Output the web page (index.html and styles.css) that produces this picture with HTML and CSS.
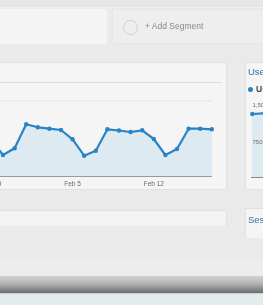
FILE: index.html
```html
<!DOCTYPE html>
<html lang="en">
<head>
  <meta charset="UTF-8" />
  <meta name="viewport" content="width=device-width, initial-scale=1" />
  <title>Audience Overview</title>
  <link rel="stylesheet" href="styles.css">
</head>
<body>

  <div class="device">
    <div class="screen">
      <div class="topline"></div>

      <!-- Segment bar -->
      <div class="toolbar">
        <div class="seg seg-current"></div>
        <div class="seg seg-add">
          <span class="seg-ring"></span>
          <span class="seg-label">+ Add Segment</span>
        </div>
      </div>

      <div class="dashboard">
        <div class="col-main">
          <!-- Sessions over time -->
          <div class="card chart-card">
            <div class="card-head"></div>
            <svg class="chart" width="226" height="106" viewBox="0 83 226 106">
              <line x1="0" y1="101" x2="212" y2="101" stroke="#e6e6e6" stroke-width="1" />
              <polygon fill="#deeaf2" points="-8.6,140 3,155 14.6,148.3 26.2,124.3 37.8,127.3 49.4,128.7 61,130 72.6,139.3 84.2,155.7 95.8,150.7 107.4,129.3 119,130.5 130.6,132 142.2,130.3 153.8,139 165.4,155 177,149 188.6,128.7 200.2,128.7 211.8,129.3 211.8,176 -8.6,176" />
              <line x1="0" y1="176.5" x2="212" y2="176.5" stroke="#9a9a9a" stroke-width="1" />
              <polyline fill="none" stroke="#2a84c3" stroke-width="2.2" stroke-linejoin="round" points="-8.6,140 3,155 14.6,148.3 26.2,124.3 37.8,127.3 49.4,128.7 61,130 72.6,139.3 84.2,155.7 95.8,150.7 107.4,129.3 119,130.5 130.6,132 142.2,130.3 153.8,139 165.4,155 177,149 188.6,128.7 200.2,128.7 211.8,129.3" />
              <g fill="#2a84c3">
                <circle cx="3" cy="155" r="2.2" />
                <circle cx="14.6" cy="148.3" r="2.2" />
                <circle cx="26.2" cy="124.3" r="2.2" />
                <circle cx="37.8" cy="127.3" r="2.2" />
                <circle cx="49.4" cy="128.7" r="2.2" />
                <circle cx="61" cy="130" r="2.2" />
                <circle cx="72.6" cy="139.3" r="2.2" />
                <circle cx="84.2" cy="155.7" r="2.2" />
                <circle cx="95.8" cy="150.7" r="2.2" />
                <circle cx="107.4" cy="129.3" r="2.2" />
                <circle cx="119" cy="130.5" r="2.2" />
                <circle cx="130.6" cy="132" r="2.2" />
                <circle cx="142.2" cy="130.3" r="2.2" />
                <circle cx="153.8" cy="139" r="2.2" />
                <circle cx="165.4" cy="155" r="2.2" />
                <circle cx="177" cy="149" r="2.2" />
                <circle cx="188.6" cy="128.7" r="2.2" />
                <circle cx="200.2" cy="128.7" r="2.2" />
                <circle cx="211.8" cy="129.3" r="2.2" />
              </g>
              <g class="axis" text-anchor="middle">
                <text x="-8.5" y="185.5">Jan 29</text>
                <text x="72.6" y="185.5">Feb 5</text>
                <text x="153.8" y="185.5">Feb 12</text>
              </g>
            </svg>
          </div>
          <div class="card card-next"></div>
        </div>

        <div class="col-side">
          <div class="card side-card">
            <div class="side-title">Users</div>
            <div class="legend"><span class="dot"></span>Users</div>
            <svg class="mini" width="17" height="94" viewBox="246 95 17 94">
              <polygon fill="#deeaf2" points="252,114 270,113 270,177 252,177" />
              <line x1="251" y1="177.5" x2="270" y2="177.5" stroke="#8a8a8a" stroke-width="1" />
              <polyline fill="none" stroke="#2a84c3" stroke-width="2.2" points="252.3,114 270,113" />
              <circle cx="252.3" cy="114" r="2.2" fill="#2a84c3" />
              <g class="axis">
                <text x="252.5" y="107">1,500</text>
                <text x="252.5" y="144">750</text>
              </g>
            </svg>
          </div>
          <div class="card side-card side-next">
            <div class="side-title">Sessions</div>
          </div>
        </div>
      </div>
    </div>

    <div class="bezel"></div>
    <div class="desk"></div>
  </div>

</body>
</html>
```

FILE: styles.css
```css
body {
  margin: 0;
  width: 263px;
  height: 305px;
  overflow: hidden;
  background: #e3eded;
  font-family: 'Liberation Sans', Arial, sans-serif;
}

.device {
  display: flex;
  flex-direction: column;
}

.screen {
  height: 276px;
  overflow: hidden;
  background: linear-gradient(to bottom, #eaeaea 258px, #ededed 259px);
  filter: blur(0.3px);
}

.topline {
  height: 7px;
  background: #e6e6e6;
  border-bottom: 1px solid #f0f0f0;
}

/* Segment bar */
.toolbar {
  display: flex;
  gap: 5px;
  margin-top: 1px;
  height: 35px;
}

.seg {
  box-sizing: border-box;
  height: 35px;
}

.seg-current {
  width: 107px;
  background: #f4f4f4;
}

.seg-add {
  flex: 1;
  display: flex;
  align-items: center;
  gap: 7px;
  padding-left: 10px;
  background: #eeeeee;
  border: 1px solid #e6e6e6;
  border-right: none;
}

.seg-ring {
  width: 13px;
  height: 13px;
  border: 1.5px solid #d0d0d0;
  border-radius: 50%;
  margin-top: 1px;
}

.seg-label {
  font-size: 8.5px;
  color: #8a8a8a;
  margin-top: -2px;
}

/* Cards */
.dashboard {
  display: grid;
  grid-template-columns: 227px 60px;
  column-gap: 18px;
  margin-top: 18px;
}

.col-main,
.col-side {
  display: flex;
  flex-direction: column;
}

.card {
  box-sizing: border-box;
  background: #f5f5f5;
  border: 1px solid #e0e0e0;
}

.chart-card {
  height: 128px;
  border-left: none;
}

.card-head {
  height: 19px;
  margin-right: 4px;
  border-bottom: 1px solid #dcdcdc;
}

.chart {
  display: block;
}

.axis {
  font-size: 6.5px;
  fill: #6a6a6a;
}

.card-next {
  height: 16px;
  margin-top: 20px;
  border-left: none;
  border-bottom: none;
  background: #f3f3f3;
}

.side-card {
  height: 128px;
  border-right: none;
  padding-top: 3px;
}

.side-title {
  padding-left: 2px;
  font-size: 9.5px;
  line-height: 12px;
  color: #3a6da6;
}

.legend {
  display: flex;
  align-items: center;
  gap: 3px;
  margin-top: 6px;
  padding-left: 2px;
  font-size: 8.5px;
  line-height: 10px;
  font-weight: bold;
  color: #444;
}

.dot {
  width: 5px;
  height: 5px;
  border-radius: 50%;
  background: #2a84c3;
}

.mini {
  display: block;
  margin-top: 1px;
}

.mini .axis {
  font-size: 6px;
}

.side-next {
  height: 30px;
  margin-top: 18px;
  padding-top: 5px;
  border-bottom: none;
}

/* Laptop edge below the screen */
.bezel {
  height: 17px;
  background: linear-gradient(to bottom, #d2d2d2 0, #b4b4b4 45%, #8c8c8c 75%, #6c6c6c 100%);
}

.desk {
  height: 12px;
  background: #e2ecec;
  border-top: 1px solid #c8d2d2;
}
```
